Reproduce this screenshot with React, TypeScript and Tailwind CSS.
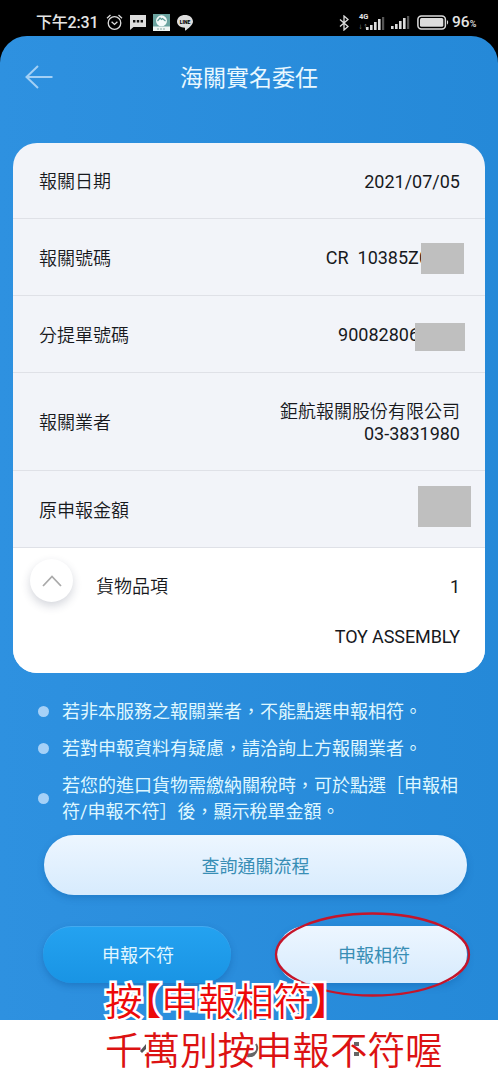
import type { ReactNode } from "react";

const notes = [
  "若非本服務之報關業者，不能點選申報相符。",
  "若對申報資料有疑慮，請洽詢上方報關業者。",
];

function Row({ label, className, children }: { label: string; className: string; children?: ReactNode }) {
  return (
    <div className={`flex items-center justify-between border-b border-[#dfe1e7] pt-[2px] pr-[25px] pl-[26px] ${className}`}>
      <span className="pt-px font-[350]">{label}</span>
      <div className="relative text-right">{children}</div>
    </div>
  );
}

function Signal({ className }: { className?: string }) {
  return (
    <svg className={`shrink-0 ${className}`} width="19" height="13" viewBox="0 0 19 13" fill="#ddd">
      <rect x="0" y="10" width="2.6" height="3" />
      <rect x="4" y="8" width="2.6" height="5" />
      <rect x="8" y="5" width="2.6" height="8" />
      <rect x="12" y="2" width="2.6" height="11" />
      <rect x="16" y="0" width="2.2" height="13" fill="#555" />
    </svg>
  );
}

function StatusBar() {
  return (
    <div className="flex h-9 items-center pt-[9px] pl-[36px] text-[#e4e4e4]">
      <span className="w-[62px] text-[16px] leading-none font-medium tracking-[-0.200px] whitespace-nowrap">下午2:31</span>
      <svg className="ml-[8px]" width="17" height="17" viewBox="0 0 17 17" fill="none" stroke="#ddd" strokeWidth="1.3">
        <circle cx="8.5" cy="9" r="6.3" />
        <path d="M5.6 7.7l2.9 2.7 2.9-2.7M1 4.2L4.5 1M16 4.2L12.5 1" />
      </svg>
      <svg className="ml-[7px]" width="16" height="15" viewBox="0 0 16 15">
        <path d="M0 0h16v12H3.500L0 15z" fill="#ddd" />
        <path d="M3 5h2.400v2.500H3zM6.800 5h2.400v2.500H6.800zM10.600 5H13v2.500h-2.400z" fill="#111" />
      </svg>
      <svg className="ml-[7px]" width="17" height="17" viewBox="0 0 17 17">
        <rect width="17" height="17" fill="#6aa39f" />
        <circle cx="8.500" cy="6.800" r="5.500" fill="#f4fbfa" />
        <path d="M4.500 7l2.500-3 1.500 1.500 1-1L12.500 7" fill="none" stroke="#5b9b96" strokeWidth="1.200" />
        <rect y="12.500" width="17" height="4.500" fill="#eef5f3" />
        <path d="M4 15h9" stroke="#86aaa5" strokeDasharray="2 1" />
      </svg>
      <div className="relative ml-[7px] h-[16px] w-[16px]">
        <svg width="16" height="16" viewBox="0 0 16 16" fill="#ddd">
          <path d="M8 0c4.400 0 8 2.700 8 6.500 0 3.500-4.500 7-8 9.300v-3C3.500 12.600 0 10.200 0 6.500 0 2.700 3.600 0 8 0z" />
        </svg>
        <span className="absolute top-[4px] left-0 w-4 text-center text-[5px] leading-[6px] font-black text-black">LINE</span>
      </div>
      <svg className="ml-[146px]" width="10" height="16" viewBox="0 0 10 16" fill="none" stroke="#ddd" strokeWidth="1.300">
        <path d="M1 4.500l8 7-4 3.500V1l4 3.500-8 7" />
      </svg>
      <div className="relative ml-[9px] h-4 w-[26px]">
        <span className="absolute top-[-2px] left-[1px] text-[7.500px] leading-[8px] font-bold">4G</span>
        <span className="absolute top-[8px] left-0 text-[5px] leading-[6px] text-[#999]">↓↑</span>
        <Signal className="absolute top-[2px] left-[8px]" />
      </div>
      <Signal className="ml-[7px]" />
      <svg className="ml-[7px]" width="32" height="15" viewBox="0 0 32 15">
        <rect x="0.900" y="0.900" width="27.500" height="13" rx="3.500" fill="none" stroke="#ddd" strokeWidth="1.500" />
        <rect x="3" y="3" width="23.300" height="8.800" rx="1.500" fill="#ddd" />
        <path d="M30 5.300c1.500 0 1.500 4.200 0 4.200z" fill="#ddd" />
      </svg>
      <span className="ml-[3px] text-[15.500px] leading-none font-medium">
        96<span className="text-[9px]">%</span>
      </span>
    </div>
  );
}

export default function App() {
  return (
    <div className="relative flex h-[1080px] w-[498px] flex-col overflow-hidden bg-black font-[Roboto,'Noto_Sans_CJK_TC',sans-serif] text-[18px]">
      <StatusBar />

      <main className="flex h-[984px] flex-col rounded-t-[27px] bg-gradient-to-r from-[#2e91e0] to-[#2589d8]">
        <header className="flex h-[107px] items-start pt-[26px]">
          <svg className="mt-[2px] ml-[25px]" width="28" height="26" viewBox="0 0 28 26" fill="none" stroke="#a3d0f5" strokeWidth="2">
            <path d="M13 2L1.500 13 13 24M1.500 13H27.500" />
          </svg>
          <h1 className="mt-[2px] ml-[127px] text-[23px] leading-[30px] text-[#e9f8ff]">海關實名委任</h1>
        </header>

        <section className="mx-[13px] flex h-[530px] flex-col overflow-hidden rounded-[24px] bg-[#f2f4f9] leading-[22px] text-[#17191d]">
          <Row label="報關日期" className="h-[76px]">
            2021/07/05
          </Row>
          <Row label="報關號碼" className="h-[77px]">
            <span className="mr-[31px] whitespace-pre">CR  10385Z0</span>
            <div className="absolute top-[-4px] right-[-4px] h-[31px] w-[43px] bg-[#bfbfbf]" />
          </Row>
          <Row label="分提單號碼" className="h-[77px]">
            <span className="mr-[41px]">90082806</span>
            <div className="absolute top-[-1px] right-[-5px] h-[28px] w-[50px] bg-[#bfbfbf]" />
          </Row>
          <Row label="報關業者" className="h-[98px]">
            <span className="font-[350]">鉅航報關股份有限公司</span>
            <br />
            03-3831980
          </Row>
          <Row label="原申報金額" className="h-[77px]">
            <div className="-mt-[7px] -mr-[11px] h-[41px] w-[53px] bg-[#bfbfbf]" />
          </Row>
          <div className="flex grow bg-white pr-[25px] pl-[17px]">
            <button className="mt-[11px] flex h-[43px] w-[43px] items-center justify-center rounded-full bg-white shadow-[0_4px_10px_rgba(40,50,80,0.200)]" aria-label="收合">
              <svg width="20" height="12" viewBox="0 0 20 12" fill="none" stroke="#aaa" strokeWidth="1.800">
                <path d="M1 11l9-9.500L19 11" />
              </svg>
            </button>
            <span className="mt-[28px] ml-[23px] font-[350]">貨物品項</span>
            <div className="ml-auto flex flex-col items-end pt-[28px]">
              <span>1</span>
              <span className="mt-[28px] tracking-[-0.100px]">TOY ASSEMBLY</span>
            </div>
          </div>
        </section>

        <ul className="mt-[26px] flex h-[136px] flex-col gap-[11px] pl-[38px] leading-[26px] text-[#dff7ff]">
          {notes.map((note) => (
            <li key={note} className="flex items-center gap-[13px] whitespace-nowrap">
              <i className="-mt-[2px] h-[11px] w-[11px] rounded-full bg-[#a6d1f7]" />
              {note}
            </li>
          ))}
          <li className="flex items-center gap-[13px] whitespace-nowrap">
            <i className="-mt-[2px] h-[11px] w-[11px] rounded-full bg-[#a6d1f7]" />
            <span>
              若您的進口貨物需繳納關稅時，可於點選［申報相
              <br />
              符/申報不符］後，顯示稅單金額。
            </span>
          </li>
        </ul>

        <button className="ml-[44px] h-[60px] w-[423px] shrink-0 rounded-full bg-gradient-to-b from-[#edf6ff] to-[#d7ebfd] pt-[2px] text-[#388eb5] shadow-[0_3px_7px_rgba(0,70,140,0.250)]">
          查詢通關流程
        </button>

        <div className="mt-[31px] flex pr-[31px] pl-[43px]">
          <button className="h-[57px] w-[188px] rounded-full border-t border-[#43aaf0] bg-gradient-to-b from-[#24a2f0] to-[#1994e4] pl-[2px] text-[#e2f7ff] shadow-[0_3px_7px_rgba(0,70,140,0.300)]">
            申報不符
          </button>
          <button className="ml-auto h-[57px] w-[190px] rounded-full bg-gradient-to-b from-[#edf6ff] to-[#d7ebfd] pt-[1px] pl-[4px] text-[#388eb5] shadow-[0_3px_7px_rgba(0,70,140,0.250)]">
            申報相符
          </button>
        </div>
      </main>

      {/* system navigation keys, mostly under the annotation */}
      <nav className="relative h-[60px] bg-white">
        <svg className="absolute top-[18px] left-[136px]" width="230" height="24" viewBox="0 0 230 24" fill="none" stroke="#666" strokeWidth="2">
          <path d="M4 13l6-7v5l-4 4z" fill="#555" stroke="none" />
          <path d="M112 18a8 8 0 0 0 8-12" />
          <path d="M111 15c3 1 6 0 10-3-1 5-5 8-10 7z" fill="#666" stroke="none" />
          <path d="M218 6h5M218 16h5" strokeWidth="4" />
        </svg>
      </nav>

      {/* annotation over the screen */}
      <svg className="absolute top-[910px] left-[273px]" width="200" height="90" viewBox="0 0 200 90" fill="none">
        <ellipse cx="99.500" cy="44.500" rx="96.500" ry="41" stroke="#c5152a" strokeWidth="2.300" />
      </svg>
      <div className="absolute top-[978px] left-[105px] font-['Noto_Sans_CJK_TC',sans-serif] text-[37.500px] leading-[48px] font-[350] whitespace-nowrap">
        <p className="relative -top-[3px] text-[#ed0909] [-webkit-text-stroke:5px_white] [font-feature-settings:'halt'] [paint-order:stroke_fill]">
          按【申報相符】
        </p>
        <p className="relative -top-[2px] text-[#dc1212]">千萬別按申報不符喔</p>
      </div>
    </div>
  );
}
